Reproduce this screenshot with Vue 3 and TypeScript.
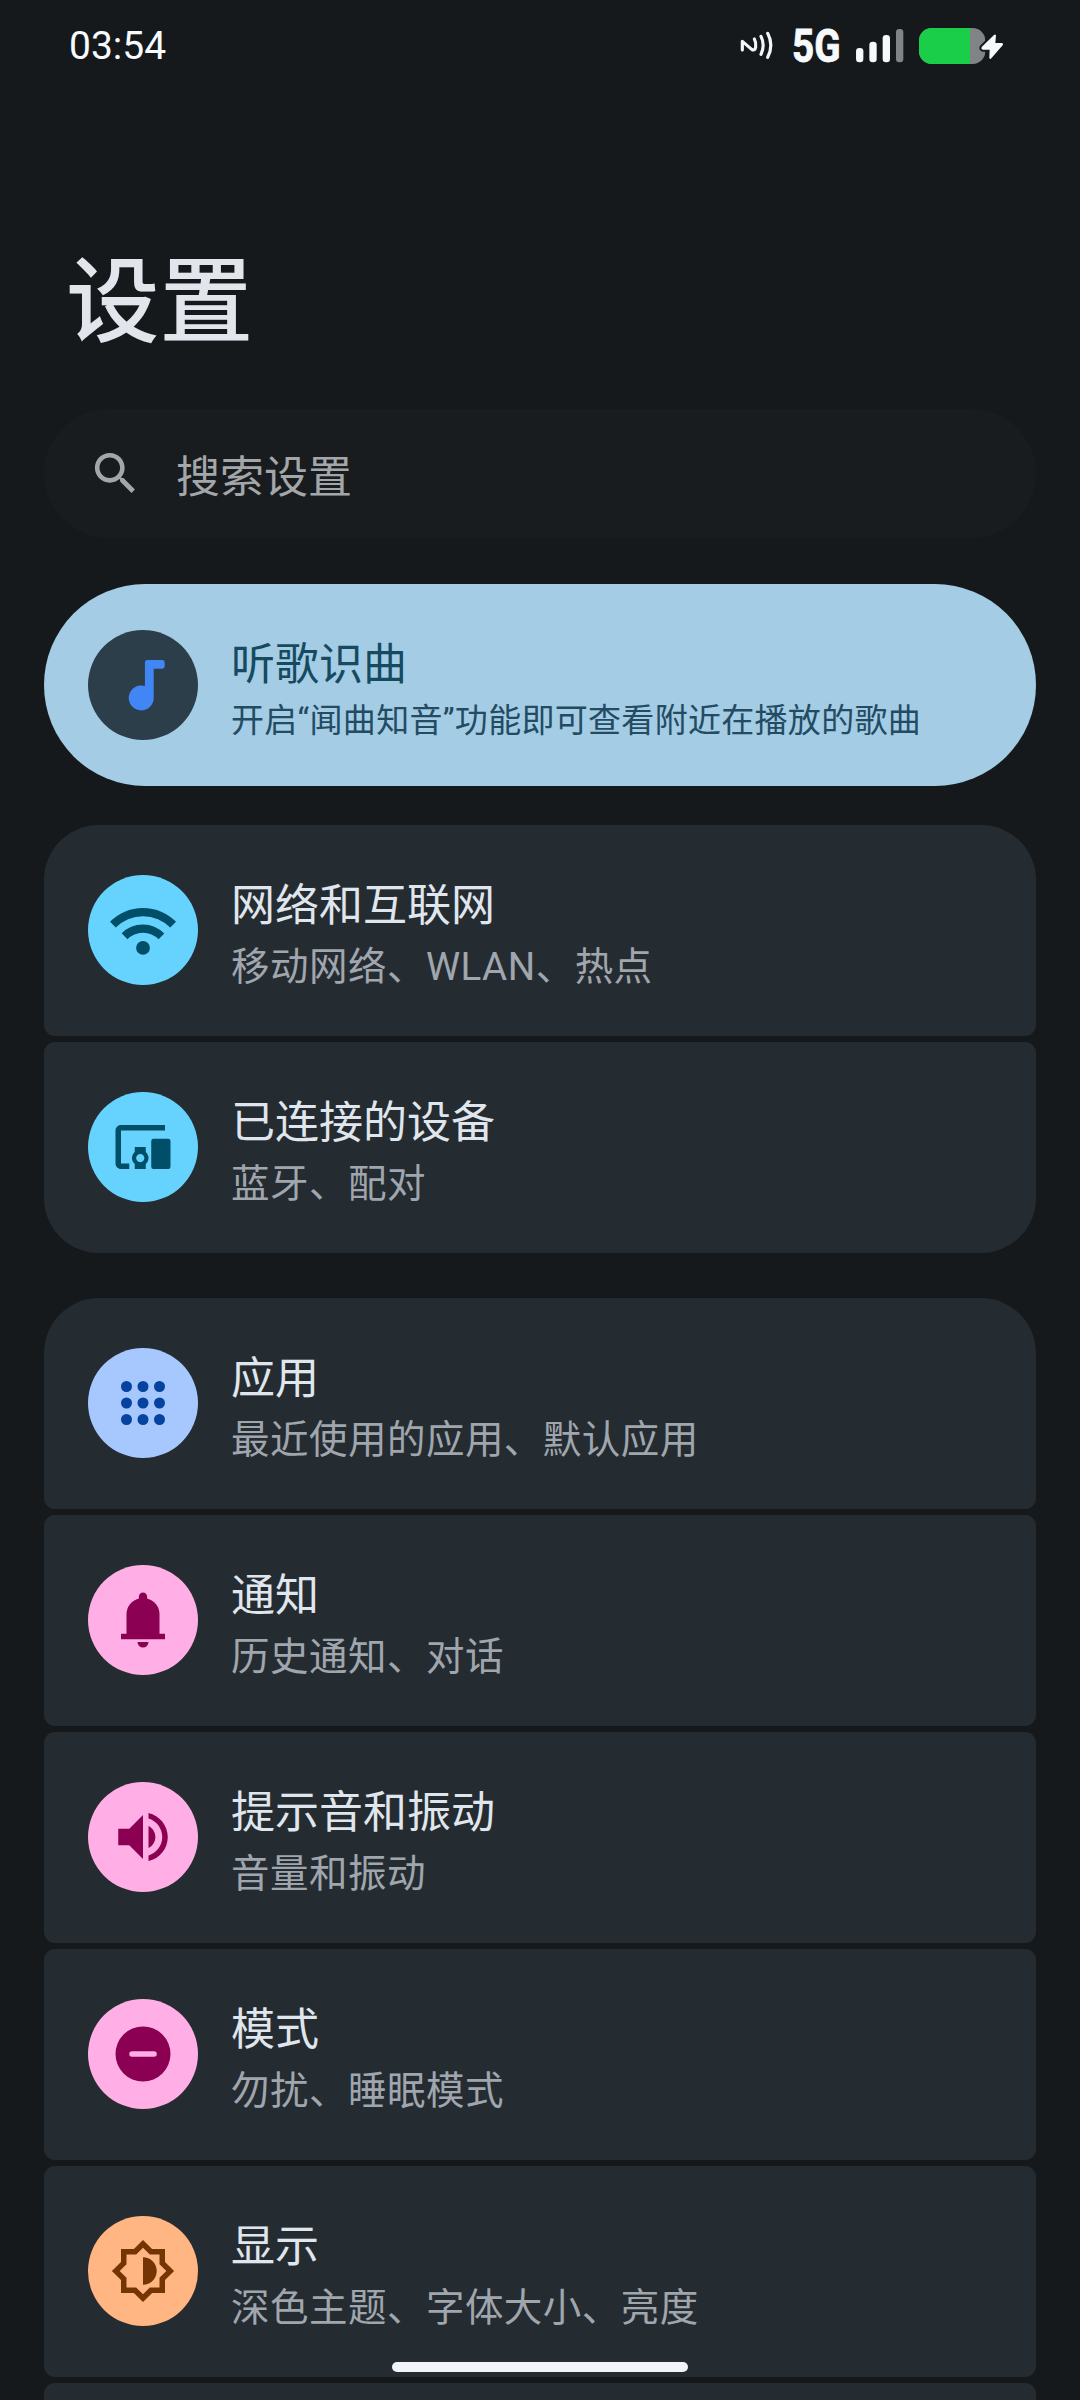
<script setup lang="ts">
interface SettingItem {
  id: string
  title: string
  summary: string
  circle: string
  color: string
  icon: string
}

const musicIcon =
  'M13.9 2.9H19Q19.9 2.9 19.9 3.8V5.2Q19.9 6.1 19 6.1H15.9V16.7A4.55 4.55 0 1 1 12.7 12.35V3.8Q12.7 2.9 13.6 2.9Z'

const groups: SettingItem[][] = [
  [
    {
      id: 'network',
      title: '网络和互联网',
      summary: '移动网络、WLAN、热点',
      circle: '#66d3ff',
      color: '#004e68',
      icon: 'M12 21q-1.05 0-1.775-.725T9.5 18.5q0-1.05.725-1.775T12 16q1.05 0 1.775.725T14.5 18.5q0 1.05-.725 1.775T12 21ZM6.35 15.35 4.25 13.2q1.475-1.475 3.463-2.337Q9.7 10 12 10t4.288.875q1.987.875 3.462 2.375l-2.1 2.1q-1.1-1.1-2.55-1.725Q13.65 13 12 13t-3.1.625q-1.45.625-2.55 1.725ZM2.1 11.1 0 9q2.3-2.35 5.375-3.675Q8.45 4 12 4t6.625 1.325Q21.7 6.65 24 9l-2.1 2.1q-1.925-1.925-4.463-3.012Q14.9 7 12 7T6.563 8.088Q4.025 9.175 2.1 11.1Z',
    },
    {
      id: 'devices',
      title: '已连接的设备',
      summary: '蓝牙、配对',
      circle: '#66d3ff',
      color: '#004e68',
      icon: 'M20 6H4v12h3v2H4c-1.1 0-2-.9-2-2V6c0-1.1.9-2 2-2h16ZM13 12H9v1.78c-.61.55-1 1.33-1 2.22s.39 1.67 1 2.22V20h4v-1.78c.61-.55 1-1.34 1-2.22s-.39-1.67-1-2.22V12Zm-2 5.5c-.83 0-1.5-.67-1.5-1.5s.67-1.5 1.5-1.5 1.5.67 1.5 1.5-.67 1.5-1.5 1.5ZM15.8 9h5.4q.8 0 .8.8v9.4q0 .8-.8.8h-5.4q-.8 0-.8-.8V9.8q0-.8.8-.8Z',
    },
  ],
  [
    {
      id: 'apps',
      title: '应用',
      summary: '最近使用的应用、默认应用',
      circle: '#a6c8ff',
      color: '#0642a0',
      icon: [6, 12, 18]
        .flatMap((y) => [6, 12, 18].map((x) => `M${x - 2} ${y}a2 2 0 1 0 4 0a2 2 0 1 0-4 0Z`))
        .join(''),
    },
    {
      id: 'notifications',
      title: '通知',
      summary: '历史通知、对话',
      circle: '#ffafe5',
      color: '#8b0053',
      icon: 'M4 19v-2h2v-7q0-2.075 1.25-3.687Q8.5 4.7 10.5 4.2v-.7q0-.625.438-1.062Q11.375 2 12 2t1.063.438q.437.437.437 1.062v.7q2 .5 3.25 2.113Q18 7.925 18 10v7h2v2Zm8 3q-.825 0-1.412-.587Q10 20.825 10 20h4q0 .825-.587 1.413Q12.825 22 12 22Z',
    },
    {
      id: 'sound',
      title: '提示音和振动',
      summary: '音量和振动',
      circle: '#ffafe5',
      color: '#8b0053',
      icon: 'M3 9v6h4l5 5V4L7 9H3zm13.5 3c0-1.77-1.02-3.29-2.5-4.03v8.05c1.48-.73 2.5-2.25 2.5-4.02zM14 3.23v2.06c2.89.86 5 3.54 5 6.71s-2.11 5.85-5 6.71v2.06c4.01-.91 7-4.49 7-8.77s-2.99-7.86-7-8.77z',
    },
    {
      id: 'modes',
      title: '模式',
      summary: '勿扰、睡眠模式',
      circle: '#ffafe5',
      color: '#8b0053',
      icon: 'M2 12a10 10 0 1 0 20 0a10 10 0 1 0-20 0ZM8 11h8a1 1 0 0 1 0 2H8a1 1 0 0 1 0-2Z',
    },
    {
      id: 'display',
      title: '显示',
      summary: '深色主题、字体大小、亮度',
      circle: '#ffb682',
      color: '#753403',
      icon: 'M20 8.69V4h-4.69L12 .69 8.69 4H4v4.69L.69 12 4 15.31V20h4.69L12 23.31 15.31 20H20v-4.69L23.31 12 20 8.69zm-2 5.79V18h-3.52L12 20.48 9.52 18H6v-3.52L3.52 12 6 9.52V6h3.52L12 3.52 14.48 6H18v3.52L20.48 12 18 14.48zM12 7v10c2.76 0 5-2.24 5-5s-2.24-5-5-5z',
    },
  ],
]
</script>

<template>
  <div class="screen">
    <header class="status-bar">
      <span class="clock">03:54</span>
      <div class="status-icons">
        <svg class="nfc" viewBox="60 66 99 90" fill="none" stroke="#f4f7fa" stroke-linecap="round" stroke-linejoin="round">
          <path d="M67 123V97L95 121Q105 127 107 114Q109 100 103 90" stroke-width="9.5" />
          <path d="M123 82Q136 108 123 136" stroke-width="9.5" />
          <path d="M143 73Q162 108 143 145" stroke-width="9.5" />
        </svg>
        <span class="network-type">5G</span>
        <svg class="signal" viewBox="0 0 143 100" fill="#f7fafc">
          <rect x="0" y="57" width="22" height="43" rx="10" />
          <rect x="40" y="38" width="22" height="62" rx="10" />
          <rect x="80" y="18" width="22" height="82" rx="10" />
          <rect x="120" y="0" width="22" height="100" rx="10" fill="#818486" />
        </svg>
        <svg class="battery" viewBox="0 0 258 108">
          <defs>
            <clipPath id="battery-shape"><rect width="199" height="108" rx="38" /></clipPath>
          </defs>
          <g clip-path="url(#battery-shape)">
            <rect width="199" height="108" fill="#818486" />
            <rect width="153" height="108" fill="#1bce4a" />
          </g>
          <path
            d="M225 21 188 57Q185 63 191 65H212L211 90Q213 95 217 91L251 52Q254 46 248 45H229L231 22Q229 18 225 21Z"
            fill="#f7fafc" stroke="#15191c" stroke-width="12" stroke-linejoin="round" paint-order="stroke"
          />
        </svg>
      </div>
    </header>

    <h1 class="page-title">设置</h1>

    <div class="search">
      <svg class="search-icon" viewBox="0 0 24 24">
        <path d="M15.5 14h-.79l-.28-.27C15.41 12.59 16 11.11 16 9.5 16 5.91 13.09 3 9.5 3S3 5.91 3 9.5 5.91 16 9.5 16c1.61 0 3.09-.59 4.23-1.57l.27.28v.79l5 4.99L20.49 19l-4.99-5zm-6 0C7.01 14 5 11.99 5 9.5S7.01 5 9.5 5 14 7.01 14 9.5 11.99 14 9.5 14z" />
      </svg>
      <span class="search-label">搜索设置</span>
    </div>

    <section class="banner">
      <div class="circle banner-circle">
        <svg class="icon" viewBox="0 0 24 24" fill="#4285f4"><path :d="musicIcon" /></svg>
      </div>
      <div class="banner-copy">
        <div class="banner-title">听歌识曲</div>
        <div class="banner-summary">开启“闻曲知音”功能即可查看附近在播放的歌曲</div>
      </div>
    </section>

    <main class="groups">
      <section v-for="(group, index) in groups" :key="index" class="group" :class="{ open: index === groups.length - 1 }">
        <article v-for="item in group" :key="item.id" class="row">
          <div class="circle" :style="{ background: item.circle }">
            <svg class="icon" viewBox="0 0 24 24" :fill="item.color" fill-rule="evenodd"><path :d="item.icon" /></svg>
          </div>
          <div class="copy">
            <div class="title">{{ item.title }}</div>
            <div class="summary">{{ item.summary }}</div>
          </div>
        </article>
        <article v-if="index === groups.length - 1" class="row"></article>
      </section>
    </main>

    <div class="home-indicator"></div>
  </div>
</template>

<style>
body {
  background: #15191c;
}
</style>

<style scoped>
.screen {
  position: relative;
  box-sizing: border-box;
  display: flex;
  flex-direction: column;
  width: 1080px;
  height: 2400px;
  padding: 0 44px;
  overflow: hidden;
  background: #15191c;
  font-family: Roboto, "Noto Sans CJK SC", sans-serif;
}

.status-bar {
  flex: none;
  display: flex;
  align-items: center;
  justify-content: space-between;
  height: 92px;
  padding: 0 32px 0 25px;
}

.clock {
  color: #f8fbfd;
  font-size: 39px;
  line-height: 46px;
}

.status-icons {
  display: flex;
  align-items: center;
  margin-right: -1px;
}

.nfc {
  width: 33px;
  height: 30px;
  margin-right: 19px;
}

.network-type {
  width: 58px;
  margin-right: 6px;
  color: #f7fafc;
  font-size: 46px;
  font-weight: 700;
  line-height: 60px;
  white-space: nowrap;
  -webkit-text-stroke: 0.8px #f7fafc;
  transform: scaleX(0.84);
  transform-origin: left center;
}

.signal {
  width: 47.7px;
  height: 33.3px;
  margin-right: 15px;
}

.battery {
  width: 86px;
  height: 36px;
}

.page-title {
  flex: none;
  height: 120px;
  margin: 151px 0 0 22px;
  color: #e2e6ec;
  font-size: 93.5px;
  font-weight: 500;
  line-height: 120px;
}

.search {
  flex: none;
  display: flex;
  align-items: center;
  gap: 33px;
  height: 129px;
  margin-top: 46px;
  padding-left: 44px;
  border-radius: 65px;
  background: #181c1f;
}

.search-icon {
  width: 55px;
  height: 55px;
  fill: #a3a7aa;
}

.search-label {
  padding-top: 9px;
  color: #a3a7aa;
  font-size: 44px;
  line-height: 60px;
}

.banner {
  flex: none;
  box-sizing: border-box;
  display: flex;
  gap: 33px;
  height: 202px;
  margin-top: 46px;
  padding: 46px 44px 0;
  border-radius: 101px;
  background: #a4cce5;
}

.circle {
  flex: none;
  display: flex;
  align-items: center;
  justify-content: center;
  width: 110px;
  height: 110px;
  border-radius: 50%;
}

.banner-circle {
  background: #2b3e4a;
}

.icon {
  width: 66px;
  height: 66px;
}

.banner-copy {
  padding-top: 3px;
  white-space: nowrap;
}

.banner-title {
  color: #164a5f;
  font-size: 44px;
  line-height: 64px;
}

.banner-summary {
  color: #234b62;
  font-size: 33px;
  line-height: 48px;
  letter-spacing: 0.3px;
}

.groups {
  display: flex;
  flex-direction: column;
  gap: 45px;
  margin-top: 39px;
}

.group {
  display: flex;
  flex-direction: column;
  gap: 6px;
}

.row {
  flex: none;
  box-sizing: border-box;
  display: flex;
  gap: 33px;
  height: 211px;
  padding: 50px 44px 0;
  border-radius: 11px;
  background: #252c31;
}

.group .row:first-child {
  border-top-left-radius: 55px;
  border-top-right-radius: 55px;
}

.group:not(.open) .row:last-child {
  border-bottom-left-radius: 55px;
  border-bottom-right-radius: 55px;
}

.copy {
  white-space: nowrap;
}

.title {
  color: #e0e6ed;
  font-size: 44px;
  line-height: 63px;
}

.summary {
  color: #a0a6ae;
  font-size: 38.5px;
  line-height: 58px;
  letter-spacing: 0.48px;
}

.home-indicator {
  position: absolute;
  top: 2362px;
  left: 392px;
  width: 296px;
  height: 10px;
  border-radius: 5px;
  background: #f1f4f8;
}
</style>
